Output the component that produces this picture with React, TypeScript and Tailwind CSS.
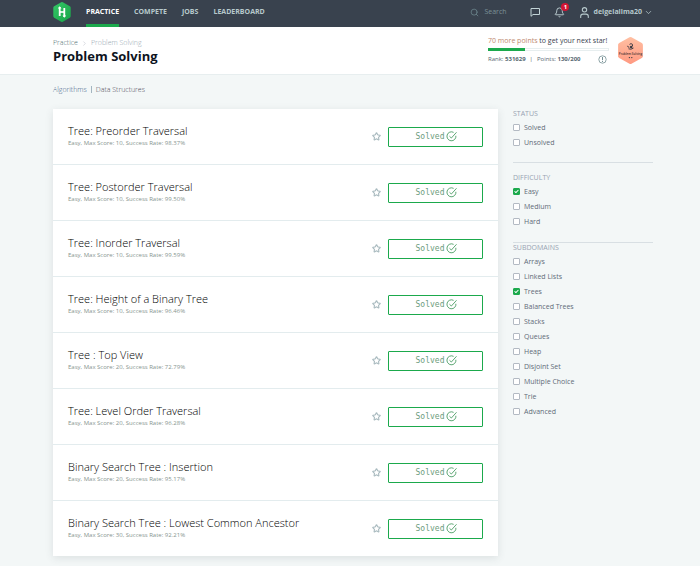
import { Bell, Check, ChevronDown, ChevronRight, Search, Star, User } from "lucide-react";

const navLinks = ["PRACTICE", "COMPETE", "JOBS", "LEADERBOARD"];

const challenges = [
  { title: "Tree: Preorder Traversal", score: 10, rate: "98.37%" },
  { title: "Tree: Postorder Traversal", score: 10, rate: "99.50%" },
  { title: "Tree: Inorder Traversal", score: 10, rate: "99.59%" },
  { title: "Tree: Height of a Binary Tree", score: 10, rate: "96.46%" },
  { title: "Tree : Top View", score: 20, rate: "72.79%" },
  { title: "Tree: Level Order Traversal", score: 20, rate: "96.28%" },
  { title: "Binary Search Tree : Insertion", score: 20, rate: "95.17%" },
  { title: "Binary Search Tree : Lowest Common Ancestor", score: 30, rate: "92.21%" },
];

const subdomains = [
  "Arrays",
  "Linked Lists",
  "Trees",
  "Balanced Trees",
  "Stacks",
  "Queues",
  "Heap",
  "Disjoint Set",
  "Multiple Choice",
  "Trie",
  "Advanced",
];

function Logo() {
  return (
    <svg viewBox="0 0 18 20" className="h-5 w-[18px]" aria-label="HackerRank">
      <defs>
        <linearGradient id="logo" x1="0" y1="0" x2="1" y2="1">
          <stop offset="0" stopColor="#35c667" />
          <stop offset="1" stopColor="#18a548" />
        </linearGradient>
      </defs>
      <path
        d="M8.2.3q.8-.4 1.6 0l7 4q.8.5.9 1.4v8.6q-.1.9-.9 1.4l-7 4q-.8.4-1.6 0l-7-4q-.8-.5-.9-1.4V5.7q.1-.9.9-1.4z"
        fill="url(#logo)"
      />
      <g stroke="#fff" fill="none">
        <path d="M6.700 5v9M11.300 6v9" strokeWidth="1.800" />
        <path d="M7 10h4" strokeWidth="1.600" />
      </g>
      <path d="M4.800 6.500 6.700 4.300l1.800 2.200zM9.500 13.500l1.800 2.200 1.900-2.200z" fill="#fff" />
    </svg>
  );
}

function SkillBadge() {
  return (
    <svg viewBox="0 0 25 27" className="h-[27px] w-[25px]" role="img" aria-label="Problem Solving badge">
      <defs>
        <linearGradient id="badge" x1="0" y1="0" x2="0" y2="1">
          <stop offset="0" stopColor="#ffbfa2" />
          <stop offset="1" stopColor="#ff9a82" />
        </linearGradient>
      </defs>
      <path
        d="M11.5.3q1-.5 2 0l10.300 5.700q1 .6 1.100 1.700v11.600q-.1 1.100-1.100 1.700l-10.300 5.700q-1 .5-2 0L1.200 21q-1-.6-1.100-1.700V7.700Q.2 6.600 1.200 6z"
        fill="url(#badge)"
      />
      <path
        d="M11.500 7.400q1.500-1.600 3 0v1.800M9.500 8.800q.2 1.600 1.800 1.500M10.500 11.800q2.500 1.200 5-.8"
        stroke="#4a4048"
        strokeWidth="1"
        fill="none"
      />
      <circle cx="13.200" cy="10" r="1.300" fill="#3b3b45" />
      <text
        x="12.500"
        y="18"
        textAnchor="middle"
        fontSize="3"
        fontWeight="600"
        fill="#4a3434"
        fontFamily="'Open Sans', sans-serif"
      >
        Problem Solving
      </text>
      <circle cx="11.400" cy="20.600" r=".7" fill="#3b3b45" />
      <circle cx="13.800" cy="20.600" r=".7" fill="#3b3b45" />
    </svg>
  );
}

function SolvedIcon() {
  return (
    <svg viewBox="0 0 12 12" className="size-[11px] text-[#4f9f68]" fill="none" stroke="currentColor" strokeWidth="1">
      <path d="M10.800 5.200A4.900 4.900 0 1 1 8.300 1.500" />
      <path d="m3.800 5.700 2 2L11.500 1.400" />
    </svg>
  );
}

function Option({ label, checked = false }: { label: string; checked?: boolean }) {
  return (
    <label className="flex h-[15px] items-center gap-1 text-[7px] leading-[15px] text-[#5f6b78]">
      <span className="grid size-[7px] place-items-center">
        <input
          type="checkbox"
          defaultChecked={checked}
          className="peer col-start-1 row-start-1 size-[7px] appearance-none rounded-[1px] border border-[#b3bac3] bg-white checked:border-[#1ba94c] checked:bg-[#1ba94c]"
        />
        <Check
          className="pointer-events-none col-start-1 row-start-1 hidden size-[5px] text-white peer-checked:block"
          strokeWidth={5}
        />
      </span>
      {label}
    </label>
  );
}

function FilterHeading({ children }: { children: string }) {
  return <legend className="pb-[2px] text-[7px] leading-[9px] text-[#98a3b2]">{children}</legend>;
}

export default function App() {
  return (
    <div className="min-h-screen bg-[#f3f7f7] font-['Open_Sans',sans-serif] text-[#39424e]">
      <header className="flex h-[27px] items-start bg-[#39424e] pr-[47px] pl-[53px]">
        <a href="#home" className="mt-[2px] mr-[15px]">
          <Logo />
        </a>
        <nav className="flex h-full gap-[15px] text-[7px] leading-[24px] font-bold text-[#b7c9cc]">
          {navLinks.map((link, i) => (
            <a
              key={link}
              href={`#${link.toLowerCase()}`}
              className={i === 0 ? "border-b-[3px] border-[#1ba94c] text-white" : ""}
            >
              {link}
            </a>
          ))}
        </nav>
        <div className="ml-auto flex h-6 items-center">
          <label className="flex items-center gap-[5px] text-[#6f8a90]">
            <Search className="size-[9px]" strokeWidth={2} />
            <input
              type="search"
              aria-label="Search"
              placeholder="Search"
              className="w-[46px] bg-transparent text-[7px] leading-[10px] outline-none placeholder:text-[#7b9196]"
            />
          </label>
          <button type="button" aria-label="Messages" className="mr-[14px] text-[#c2d3d6]">
            <svg viewBox="0 0 10 10" className="size-[10px]" fill="none" stroke="currentColor">
              <path d="M1 1.500h8.500v6H3L1 9.300z" />
            </svg>
          </button>
          <button type="button" aria-label="Notifications" className="relative mr-[13px] text-[#c2d3d6]">
            <Bell className="size-[11px]" strokeWidth={2} />
            <span className="absolute -top-[4px] left-[7px] size-2 rounded-full bg-[#d11534] text-center text-[6px] leading-2 font-bold text-white">
              1
            </span>
          </button>
          <button type="button" className="flex items-center text-[7px] leading-[10px] font-bold text-[#b7c9cc]">
            <User className="mr-[2px] size-[13px]" strokeWidth={2} />
            deigelalima20
            <ChevronDown className="ml-[2px] size-[9px]" strokeWidth={2} />
          </button>
        </div>
      </header>

      <section className="flex h-12 justify-between border-b border-[#e7eeef] bg-white pr-[57px] pl-[53px]">
        <div className="pt-[11px]">
          <div className="flex items-center gap-[3px] text-[7px] leading-[10px] font-light">
            <a href="#practice" className="text-[#4f6f74]">
              Practice
            </a>
            <ChevronRight className="size-[7px] text-[#c2c7d0]" strokeWidth={2} />
            <span className="text-[#97a8b2]">Problem Solving</span>
          </div>
          <h1 className="text-[13px] leading-[16px] font-bold text-[#0e141e]">Problem Solving</h1>
        </div>
        <div className="flex gap-[9px] pt-[9px]">
          <div className="w-[121px]">
            <p className="text-[7px] leading-[10px] whitespace-nowrap">
              <span className="text-[#c08a70]">70 more points</span> to get your next star!
            </p>
            <div className="mt-[2px] h-[3px] border border-[#e7eeef] bg-white">
              <div className="-m-px h-[3px] w-[37px] bg-[#1ba94c]" />
            </div>
            <div className="mt-1 flex items-center text-[6px] leading-[9px] text-[#576871]">
              <span>
                Rank: <b>531629</b>
              </span>
              <span className="mx-1">|</span>
              <span>
                Points: <b>130/200</b>
              </span>
              <button type="button" aria-label="About points" className="mr-[2px] ml-auto text-[#738f93]">
                <svg viewBox="0 0 9 9" className="size-[9px]" fill="none" stroke="currentColor">
                  <circle cx="4.500" cy="4.500" r="3.700" strokeWidth=".8" />
                  <path d="M4.500 2v3.200M4.500 6v1" />
                </svg>
              </button>
            </div>
          </div>
          <div className="pt-px">
            <SkillBadge />
          </div>
        </div>
      </section>

      <main className="pr-[47px] pb-[10px] pl-[53px]">
        <nav className="flex items-center gap-[4px] pt-[9px] text-[7px] leading-[11px] font-light">
          <a href="#algorithms" className="text-[#45658a]">
            Algorithms
          </a>
          <span className="h-[7px] w-px bg-[#a3b5c0]" />
          <a href="#data-structures" className="text-[#4f4b5a]">
            Data Structures
          </a>
        </nav>

        <div className="mt-[14px] flex items-start gap-[15px]">
          <ul className="min-w-0 flex-1 bg-white shadow-[0_2px_8px_rgba(57,66,78,0.12)]">
            {challenges.map((c) => (
              <li
                key={c.title}
                className="flex h-14 items-center border-b border-[#e3ecee] px-[15px] last:h-[55px] last:border-b-0"
              >
                <div className="flex-1">
                  <h2 className="text-[11px] leading-[14px] font-[350] text-black">
                    <a href="#challenge">{c.title}</a>
                  </h2>
                  <p className="text-[6px] leading-[11px] text-[#87958f]">
                    Easy, Max Score: {c.score}, Success Rate: {c.rate}
                  </p>
                </div>
                <button type="button" aria-label={`Bookmark ${c.title}`} className="mr-[7px] text-[#a9babf]">
                  <Star className="size-[9px]" strokeWidth={3} />
                </button>
                <button
                  type="button"
                  className="flex h-5 w-[95px] items-center justify-center gap-[2px] rounded-[1px] border border-[#1ba94c] pl-[2px] font-['DejaVu_Sans_Mono',monospace] text-[8px] text-[#6c9c7d]"
                >
                  Solved
                  <SolvedIcon />
                </button>
              </li>
            ))}
          </ul>

          <aside className="w-[140px]">
            <fieldset className="border-b border-[#d8dfe3] pb-3">
              <FilterHeading>STATUS</FilterHeading>
              <Option label="Solved" />
              <Option label="Unsolved" />
            </fieldset>
            <fieldset className="mt-[10px] border-b border-[#d8dfe3] pb-[13px]">
              <FilterHeading>DIFFICULTY</FilterHeading>
              <Option label="Easy" checked />
              <Option label="Medium" />
              <Option label="Hard" />
            </fieldset>
            <fieldset>
              <FilterHeading>SUBDOMAINS</FilterHeading>
              {subdomains.map((s) => (
                <Option key={s} label={s} checked={s === "Trees"} />
              ))}
            </fieldset>
          </aside>
        </div>
      </main>
    </div>
  );
}
